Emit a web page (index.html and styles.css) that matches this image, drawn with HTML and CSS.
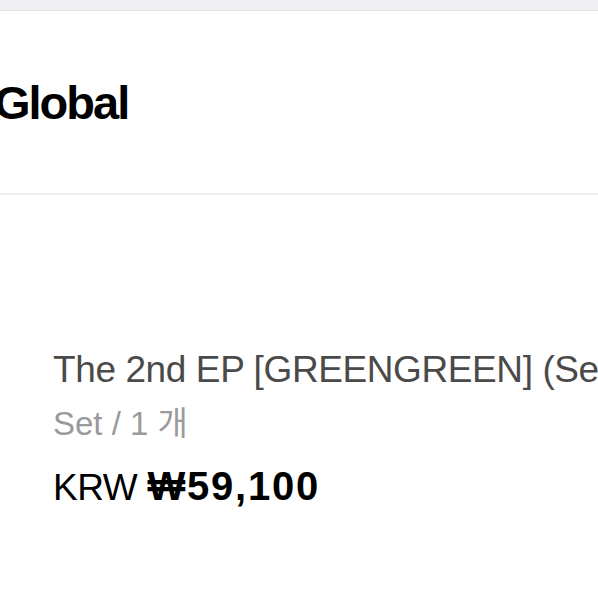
FILE: index.html
```html
<!DOCTYPE html>
<html lang="ko">
<head>
<meta charset="utf-8">
<title>Global</title>
<link rel="stylesheet" href="styles.css">
</head>
<body>
  <div class="topbar"></div>
  <header class="header">
    <h1 class="brand">Global</h1>
  </header>
  <main class="item">
    <p class="item-title">The 2nd EP [GREENGREEN] (Set)</p>
    <p class="item-option">Set / 1 개</p>
    <p class="item-price"><span class="currency">KRW</span> <span class="amount">₩59,100</span></p>
  </main>
</body>
</html>
```

FILE: styles.css
```css
html, body {
  margin: 0;
  padding: 0;
  background: #ffffff;
}
body {
  width: 598px;
  height: 598px;
  overflow: hidden;
  font-family: "Liberation Sans", Arial, "Noto Sans CJK KR", sans-serif;
}
.topbar {
  height: 10px;
  background: #f0f0f2;
  border-bottom: 1px solid #e3e3e6;
}
.header {
  height: 182px;
  display: flex;
  align-items: center;
  border-bottom: 2px solid #efefef;
}
.brand {
  margin: 0 0 0 -6px;
  font-size: 47px;
  font-weight: 700;
  letter-spacing: -2px;
  color: #000000;
  line-height: 1;
}
.item {
  padding: 151px 0 0 53px;
  white-space: nowrap;
  overflow: hidden;
}
.item p {
  margin: 0;
  white-space: nowrap;
}
.item-title {
  font-size: 37px;
  line-height: 48px;
  color: #4a4a4a;
  letter-spacing: -0.4px;
}
.item-option {
  margin-top: 6px !important;
  font-size: 33px;
  line-height: 48px;
  color: #9a9a9a;
}
.item-price {
  margin-top: 14px !important;
  font-size: 37px;
  line-height: 48px;
  color: #000000;
}
.currency {
  font-weight: 400;
  letter-spacing: -0.5px;
}
.amount {
  font-size: 40px;
  font-weight: 700;
  letter-spacing: 1.8px;
}
```
